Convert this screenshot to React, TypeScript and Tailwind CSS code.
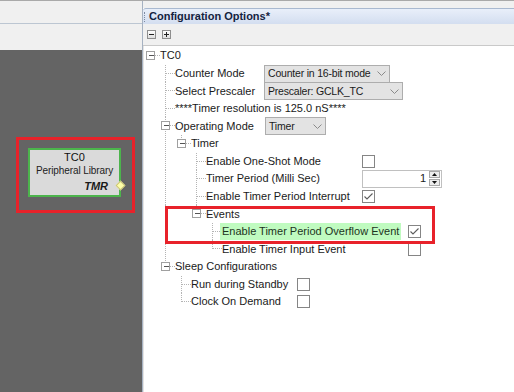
import type { ReactNode } from 'react';

const ROW_H = 17.57;
const LINE_X = [6.5, 21.5, 37.5, 52.5, 68.5];
const DOT = '#b4b4b4';

type TreeRow = {
  level: number;
  label: string;
  expand?: boolean;
  last?: boolean;
  cont?: number[];
  labelClass?: string;
  highlight?: boolean;
  value?: ReactNode;
};

function Guide({ level, expand, last, cont = [] }: TreeRow) {
  const x = LINE_X[level];
  const w = x + 9.5;
  const mid = 8.5;
  return (
    <svg width={w} height={ROW_H} className="shrink-0" shapeRendering="crispEdges">
      {cont.map((k) => (
        <line key={k} x1={LINE_X[k]} y1={0} x2={LINE_X[k]} y2={ROW_H} stroke={DOT} strokeDasharray="1 1" />
      ))}
      {level > 0 && (
        <line x1={x} y1={0} x2={x} y2={last ? mid : ROW_H} stroke={DOT} strokeDasharray="1 1" />
      )}
      <line x1={x} y1={mid} x2={x + 9} y2={mid} stroke={DOT} strokeDasharray="1 1" />
      {expand && (
        <g>
          <rect x={x - 4} y={mid - 4} width={8} height={8} fill="#fff" stroke="#a0a0a0" />
          <line x1={x - 2} y1={mid} x2={x + 3} y2={mid} stroke="#555" />
        </g>
      )}
    </svg>
  );
}

function Chevron() {
  return (
    <svg width="9" height="5" viewBox="0 0 9 5" className="shrink-0">
      <polyline points="0.5,0.5 4.5,4.5 8.5,0.5" fill="none" stroke="#8a8a8a" strokeWidth="1" />
    </svg>
  );
}

function Select({ text, className }: { text: string; className: string }) {
  return (
    <div
      className={`flex h-[18px] shrink-0 items-center justify-between border border-[#adadad] bg-[#e3e3e3] pl-[3px] pr-[3px] ${className}`}
    >
      <span className="whitespace-nowrap text-[10.5px] tracking-[-0.2px]">{text}</span>
      <Chevron />
    </div>
  );
}

function Checkbox({ checked }: { checked?: boolean }) {
  return (
    <div className="flex h-[13px] w-[13px] shrink-0 items-center justify-center border border-[#858585] bg-white">
      {checked && (
        <svg width="11" height="11" viewBox="0 0 11 11">
          <polyline points="1.5,5.5 4,8 9.5,2.5" fill="none" stroke="#5c5c5c" strokeWidth="1.1" />
        </svg>
      )}
    </div>
  );
}

function Spinner({ value }: { value: string }) {
  return (
    <div className="flex h-[18px] w-[80px] shrink-0 items-center justify-end border border-[#c0c0c0] bg-white pr-[1px]">
      <span className="mr-[3px] text-[#1a1a1a]">{value}</span>
      <div className="flex h-[15px] w-[11px] flex-col gap-[1px]">
        <div className="flex flex-1 items-center justify-center border border-[#a8a8a8] bg-[#ececec]">
          <svg width="5" height="3" viewBox="0 0 5 3">
            <polygon points="0,3 2.5,0 5,3" fill="#111" />
          </svg>
        </div>
        <div className="flex flex-1 items-center justify-center border border-[#a8a8a8] bg-[#ececec]">
          <svg width="5" height="3" viewBox="0 0 5 3">
            <polygon points="0,0 2.5,3 5,0" fill="#111" />
          </svg>
        </div>
      </div>
    </div>
  );
}

const rows: TreeRow[] = [
  { level: 0, label: 'TC0', expand: true },
  {
    level: 1,
    label: 'Counter Mode',
    labelClass: 'w-[89px]',
    value: <Select text="Counter in 16-bit mode" className="w-[126px]" />,
  },
  {
    level: 1,
    label: 'Select Prescaler',
    labelClass: 'w-[89px]',
    value: <Select text="Prescaler: GCLK_TC" className="w-[139px]" />,
  },
  { level: 1, label: '****Timer resolution is 125.0 nS****' },
  {
    level: 1,
    label: 'Operating Mode',
    expand: true,
    labelClass: 'w-[90px]',
    value: <Select text="Timer" className="w-[61px]" />,
  },
  { level: 2, label: 'Timer', expand: true, last: true, cont: [1] },
  { level: 3, label: 'Enable One-Shot Mode', cont: [1], labelClass: 'w-[156px]', value: <Checkbox /> },
  { level: 3, label: 'Timer Period (Milli Sec)', cont: [1], labelClass: 'w-[156px]', value: <Spinner value="1" /> },
  {
    level: 3,
    label: 'Enable Timer Period Interrupt',
    cont: [1],
    labelClass: 'w-[156px]',
    value: <Checkbox checked />,
  },
  { level: 3, label: 'Events', expand: true, last: true, cont: [1] },
  {
    level: 4,
    label: 'Enable Timer Period Overflow Event',
    cont: [1],
    labelClass: 'w-[186px]',
    highlight: true,
    value: <Checkbox checked />,
  },
  {
    level: 4,
    label: 'Enable Timer Input Event',
    last: true,
    cont: [1],
    labelClass: 'w-[186px]',
    value: <Checkbox />,
  },
  { level: 1, label: 'Sleep Configurations', expand: true, last: true },
  { level: 2, label: 'Run during Standby', labelClass: 'w-[106px]', value: <Checkbox /> },
  { level: 2, label: 'Clock On Demand', last: true, labelClass: 'w-[106px]', value: <Checkbox /> },
];

function ToolButton({ plus }: { plus?: boolean }) {
  return (
    <div className="flex h-[9px] w-[9px] items-center justify-center border border-[#8e8e8e] bg-gradient-to-b from-white to-[#dedede]">
      <svg width="7" height="7" viewBox="0 0 7 7" shapeRendering="crispEdges">
        <line x1="1" y1="3.5" x2="6" y2="3.5" stroke="#222" />
        {plus && <line x1="3.5" y1="1" x2="3.5" y2="6" stroke="#222" />}
      </svg>
    </div>
  );
}

export default function App() {
  return (
    <div className="relative flex h-[392px] w-[514px] overflow-hidden border-t border-[#a9a9a9] bg-white font-['Liberation_Sans',Arial,sans-serif] text-[11px] leading-none text-[#1a1a1a]">
      {/* composer canvas */}
      <div className="flex w-[142px] shrink-0 flex-col">
        <div className="h-[23px] border-b border-[#bcc6d2] bg-[#f0f0f0]" />
        <div className="h-[26px] bg-[#f0f0f0]" />
        <div className="relative flex-1 bg-[#646464]">
          <div className="absolute left-[16px] top-[87px] h-[76px] w-[119px] border-[3px] border-[#e8222a]" />
          <div className="absolute left-[28px] top-[98px] flex h-[49px] w-[93px] flex-col border-2 border-[#4cb44c] bg-[#dadada]">
            <div className="text-center leading-[14px] text-[#111]">TC0</div>
            <div className="text-center text-[10px] leading-[14px] tracking-[-0.1px] text-[#222]">Peripheral Library</div>
            <div className="mt-[1px] pr-[11px] text-right font-bold italic leading-[14px]">TMR</div>
          </div>
          <div className="absolute left-[117px] top-[132px] h-[7px] w-[7px] rotate-45 border border-[#c9c27a] bg-[#ffffa8]" />
        </div>
      </div>

      {/* configuration options */}
      <div className="flex flex-1 flex-col border-l border-[#a6b2c2]">
        <div className="h-[7px] bg-[#f0f0f0]" />
        <div className="flex h-[16px] items-center rounded-tl-[3px] border-t border-[#a9b9d0] bg-gradient-to-b from-[#e9effa] to-[#d3def0]">
          <div className="ml-[1px] h-[10px] border-l border-dotted border-[#7d8aa0]" />
          <span className="ml-[4px] font-bold text-[#14233f]">Configuration Options*</span>
        </div>
        <div className="flex h-[22px] items-center gap-[6px] border-b border-[#c9c9c9] bg-[#f0f0f0] pl-[4px]">
          <ToolButton />
          <ToolButton plus />
        </div>
        <div className="flex flex-1 flex-col border-l border-[#e4e4e4] pt-[1.2px]">
          {rows.map((row, i) => (
            <div key={i} className="flex h-[17.57px] shrink-0 items-center">
              <Guide {...row} />
              <div className={`flex shrink-0 items-center ${row.labelClass ?? ''}`}>
                {row.highlight ? (
                  <span className="-ml-[2px] whitespace-nowrap bg-[#c0fbc0] px-[2px] py-[3px] text-[#1d331d]">
                    {row.label}
                  </span>
                ) : (
                  <span className="whitespace-nowrap">{row.label}</span>
                )}
              </div>
              {row.value}
            </div>
          ))}
        </div>
      </div>

      <div className="absolute left-[165px] top-[205px] h-[38px] w-[270px] border-[3px] border-[#e8222a]" />
    </div>
  );
}
